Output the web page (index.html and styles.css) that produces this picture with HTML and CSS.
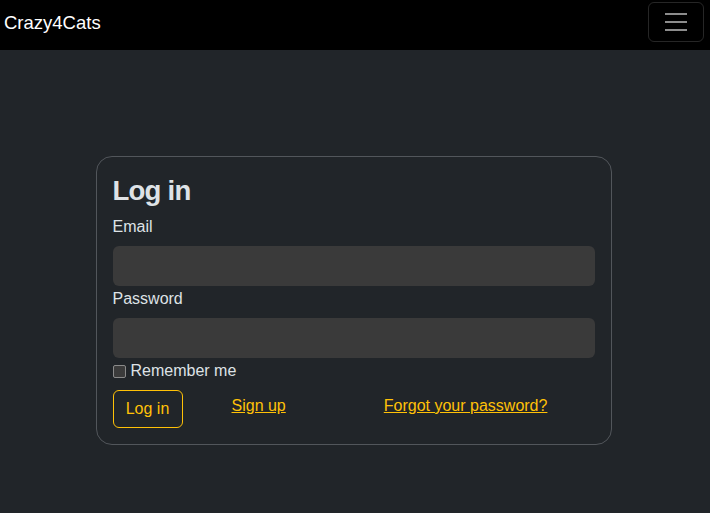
FILE: index.html
```html
<!DOCTYPE html>
<html lang="en">
<head>
<meta charset="utf-8">
<title>Crazy4Cats</title>
<link rel="stylesheet" href="styles.css">
</head>
<body>
<nav class="navbar">
  <a class="brand" href="#">Crazy4Cats</a>
  <button class="toggler" type="button" aria-label="Toggle navigation">
    <svg width="30" height="30" viewBox="0 0 30 30"><path stroke="rgba(255,255,255,0.55)" stroke-linecap="butt" stroke-width="2" d="M4 7h22M4 15h22M4 23h22"/></svg>
  </button>
</nav>
<main class="main">
  <div class="card">
    <h2 class="title">Log in</h2>
    <form class="form">
      <label class="label" for="email">Email</label>
      <input class="input" id="email" type="email">
      <label class="label" for="password">Password</label>
      <input class="input" id="password" type="password">
      <div class="check">
        <input class="checkbox" type="checkbox" id="remember">
        <label for="remember">Remember me</label>
      </div>
      <div class="actions">
        <button class="btn" type="submit">Log in</button>
        <a class="link signup" href="#">Sign up</a>
        <a class="link forgot" href="#">Forgot your password?</a>
      </div>
    </form>
  </div>
</main>
</body>
</html>
```
FILE: styles.css
```css
* { box-sizing: border-box; }
html, body { margin: 0; padding: 0; }
body {
  background: #212529;
  color: #dee2e6;
  font-family: "Liberation Sans", Arial, sans-serif;
  font-size: 16px;
  line-height: 24px;
  height: 513px;
  overflow: hidden;
}
.navbar {
  background: #000;
  height: 50px;
  display: flex;
  align-items: center;
  justify-content: space-between;
  padding: 0 6px 0 4px;
}
.brand {
  color: #fff;
  text-decoration: none;
  font-size: 18.5px;
  line-height: 30px;
  margin-top: -4px;
}
.toggler {
  width: 56px;
  height: 40px;
  margin-top: -6px;
  background: transparent;
  border: 1px solid rgba(255,255,255,0.15);
  border-radius: 6px;
  display: flex;
  align-items: center;
  justify-content: center;
  padding: 0;
}
.toggler svg { display: block; }
.main {
  display: flex;
  justify-content: center;
  padding-top: 106px;
}
.card {
  width: 516px;
  margin-left: -3px;
  border: 1px solid #52565b;
  border-radius: 16px;
  padding: 17px 16px 16px;
}
.title {
  margin: 0 0 7px;
  font-size: 27.6px;
  line-height: 33px;
  font-weight: 700;
  letter-spacing: -0.8px;
  color: #dee2e6;
}
.form { display: flex; flex-direction: column; }
.label { display: block; padding-top: 1px; margin-bottom: 7px; }
.input {
  display: block;
  width: 100%;
  height: 40px;
  background: #3a3a3a;
  border: none;
  border-radius: 6px;
  color: #dee2e6;
  font: inherit;
}
.check {
  display: flex;
  align-items: center;
  gap: 5px;
  padding-top: 1px;
  margin-bottom: -1px;
}
.checkbox {
  appearance: none;
  -webkit-appearance: none;
  width: 13px;
  height: 13px;
  margin: 0;
  border: 1px solid #8a8a8a;
  border-radius: 2px;
  background: #3b3b3b;
}
.actions {
  display: flex;
  align-items: flex-start;
  margin-top: 8px;
}
.btn {
  width: 70px;
  height: 38px;
  padding: 0;
  background: transparent;
  border: 1px solid #ffc107;
  border-radius: 6px;
  color: #ffc107;
  font: inherit;
}
.link {
  color: #ffc107;
  text-decoration: underline;
  margin-top: 4px;
}
.signup { margin-left: 49px; }
.forgot { margin-left: 98px; }
```
